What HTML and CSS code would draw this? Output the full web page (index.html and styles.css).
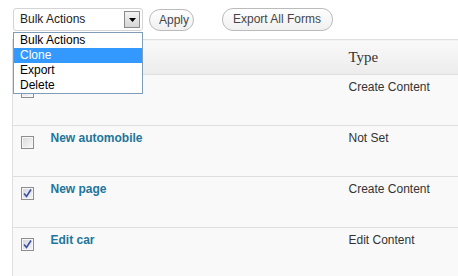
FILE: index.html
```html
<!DOCTYPE html>
<html>
<head>
<meta charset="utf-8">
<link rel="stylesheet" href="styles.css">
</head>
<body>
<div class="page">
  <div class="toolbar">
    <div class="select">
      <span class="select-text">Bulk Actions</span>
      <span class="select-arrow"><svg width="7" height="4" viewBox="0 0 7 4"><path d="M0 0H7L3.5 4Z" fill="#000"/></svg></span>
    </div>
    <span class="btn btn-apply">Apply</span>
    <span class="btn btn-export">Export All Forms</span>
  </div>
  <ul class="menu">
    <li class="menu-item">Bulk Actions</li>
    <li class="menu-item active">Clone</li>
    <li class="menu-item">Export</li>
    <li class="menu-item">Delete</li>
  </ul>
  <table class="list">
    <thead>
      <tr>
        <th class="col-cb"></th>
        <th class="col-title"></th>
        <th class="col-type">Type</th>
      </tr>
    </thead>
    <tbody>
      <tr>
        <td class="col-cb"><span class="cb"></span></td>
        <td class="col-title"><a class="row-title"></a></td>
        <td class="col-type">Create Content</td>
      </tr>
      <tr>
        <td class="col-cb"><span class="cb"></span></td>
        <td class="col-title"><a class="row-title">New automobile</a></td>
        <td class="col-type">Not Set</td>
      </tr>
      <tr>
        <td class="col-cb"><span class="cb checked"><svg width="9" height="9" viewBox="0 0 9 9"><path d="M1 4.5L3.5 7.5L8 0.5" fill="none" stroke="#3b4f9a" stroke-width="1.6"/></svg></span></td>
        <td class="col-title"><a class="row-title">New page</a></td>
        <td class="col-type">Create Content</td>
      </tr>
      <tr>
        <td class="col-cb"><span class="cb checked"><svg width="9" height="9" viewBox="0 0 9 9"><path d="M1 4.5L3.5 7.5L8 0.5" fill="none" stroke="#3b4f9a" stroke-width="1.6"/></svg></span></td>
        <td class="col-title"><a class="row-title">Edit car</a></td>
        <td class="col-type">Edit Content</td>
      </tr>
    </tbody>
  </table>
</div>
</body>
</html>
```
FILE: styles.css
```css
html, body {
  margin: 0;
  padding: 0;
  background: #fff;
  overflow: hidden;
}
body {
  font-family: "Liberation Sans", Arial, sans-serif;
  font-size: 12px;
  color: #333;
}
.page {
  position: relative;
  width: 458px;
  height: 276px;
  overflow: hidden;
}
.toolbar {
  display: flex;
  align-items: flex-start;
  height: 39px;
  padding: 8px 0 0 13px;
  box-sizing: border-box;
}
.select {
  display: flex;
  align-items: center;
  justify-content: space-between;
  width: 130px;
  height: 23px;
  box-sizing: border-box;
  border: 1px solid #d4d4d4;
  border-radius: 3px;
  background: #fff;
  padding: 0 2px 0 6px;
}
.select-text {
  color: #222;
  line-height: 15px;
}
.select-arrow {
  display: flex;
  align-items: center;
  justify-content: center;
  width: 16px;
  height: 17px;
  box-sizing: border-box;
  border: 1px solid #8a8a8a;
  background: linear-gradient(#f4f4f4, #d6d6d6);
}
.btn {
  display: inline-flex;
  align-items: center;
  height: 22px;
  margin-top: 1px;
  box-sizing: border-box;
  border: 1px solid #bbb;
  border-radius: 11px;
  background: linear-gradient(#fefefe, #f0f0f0);
  color: #464646;
  padding: 0 8px 0 9px;
  line-height: 15px;
}
.btn-apply {
  margin-left: 6px;
  width: 45px;
}
.btn-export {
  margin-left: 28px;
  margin-top: 0;
  height: 23px;
  padding: 0 10px;
  width: 111px;
}
.menu {
  position: absolute;
  left: 13px;
  top: 32px;
  width: 128px;
  margin: 0;
  padding: 0;
  list-style: none;
  border: 1px solid #7f9db9;
  background: #fff;
  z-index: 2;
}
.menu-item {
  height: 15px;
  line-height: 15px;
  padding-left: 6px;
  color: #000;
}
.menu-item.active {
  background: #3399ff;
  color: #fff;
}
.list {
  margin-left: 12px;
  width: 446px;
  table-layout: fixed;
  border-collapse: collapse;
  background: #f9f9f9;
  border-left: 1px solid #dfdfdf;
  border-top: 1px solid #dfdfdf;
}
.list th {
  height: 34px;
  padding: 0 8px;
  background: linear-gradient(#f9f9f9, #ececec);
  border-bottom: 1px solid #dfdfdf;
  font-family: "Liberation Serif", Georgia, serif;
  font-size: 15px;
  font-weight: normal;
  color: #333;
  text-align: left;
  vertical-align: middle;
}
.list td {
  height: 51px;
  box-sizing: border-box;
  padding: 5px 8px 4px;
  line-height: 15px;
  vertical-align: top;
  border-bottom: 1px solid #dfdfdf;
  color: #333;
  white-space: nowrap;
}
.list .col-cb {
  width: 28px;
  padding: 0 0 0 8px;
  box-sizing: border-box;
}
.list .col-title {
  width: 300px;
  box-sizing: border-box;
  padding-left: 10px;
}
.list td.col-cb {
  padding-top: 10px;
}
.row-title {
  font-weight: bold;
  color: #21759b;
  text-decoration: none;
}
.cb {
  display: flex;
  align-items: center;
  justify-content: center;
  width: 13px;
  height: 13px;
  box-sizing: border-box;
  border: 1px solid #8e8e8e;
  box-shadow: inset 0 0 0 1px #f6f6f6;
  background: linear-gradient(135deg, #d8d8d8, #fafafa);
}
.cb.checked {
  background: linear-gradient(135deg, #d2d5e0, #f4f4f8);
}
```
